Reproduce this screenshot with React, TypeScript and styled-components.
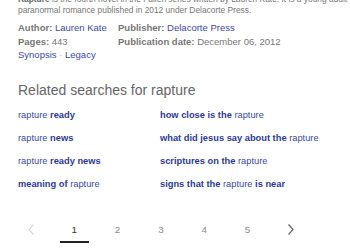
import React from "react";
import styled, { createGlobalStyle } from "styled-components";

const Global = createGlobalStyle`
  html, body { margin: 0; padding: 0; background: #fff; }
  body { font-family: Arial, "Liberation Sans", sans-serif; overflow: hidden; }
`;

const Page = styled.div`
  width: 350px;
  height: 248px;
  overflow: hidden;
  padding: 0 0 0 18px;
  box-sizing: border-box;
`;

const Desc = styled.p`
  margin: -6.25px 0 0;
  font-size: 8.4px;
  line-height: 11.5px;
  color: #777;
  white-space: nowrap;
  b { color: #666; }
`;

const Facts = styled.div`
  display: grid;
  grid-template-columns: 100px auto;
  margin-top: 4.5px;
  font-size: 9.5px;
  line-height: 13.5px;
  color: #777;
  white-space: nowrap;
`;

const Label = styled.b`
  font-weight: bold;
  color: #777;
`;

const Link = styled.a`
  color: #3b4aa8;
  text-decoration: none;
`;

const Sub = styled.div`
  font-size: 9.5px;
  line-height: 13.5px;
  color: #aaa;
`;

const Heading = styled.h3`
  margin: 19.25px 0 0;
  font-size: 14px;
  font-weight: normal;
  line-height: 18px;
  color: #666;
`;

const Related = styled.div`
  display: grid;
  grid-template-columns: 142px auto;
  margin-top: 5px;
`;

const RLink = styled.a`
  display: block;
  font-size: 9.3px;
  line-height: 23px;
  color: #3b4aa8;
  text-decoration: none;
  white-space: nowrap;
  b { font-weight: bold; color: #2c3a9c; }
`;

const Pager = styled.div`
  display: flex;
  align-items: stretch;
  gap: 14.3px;
  margin: 21px 0 0 -1.5px;
  height: 26px;
`;

const PItem = styled.div<{ $active?: boolean }>`
  width: 29px;
  height: 26px;
  box-sizing: border-box;
  display: flex;
  align-items: center;
  justify-content: center;
  font-size: 9.8px;
  color: ${(p) => (p.$active ? "#333" : "#8a8a8a")};
  border-bottom: 2px solid ${(p) => (p.$active ? "#222" : "transparent")};
`;

const Arrow = styled.svg`
  width: 7px;
  height: 11px;
`;

const related: [React.ReactNode, React.ReactNode][] = [
  [<>rapture <b>ready</b></>, <><b>how close is the</b> rapture</>],
  [<>rapture <b>news</b></>, <><b>what did jesus say about the</b> rapture</>],
  [<>rapture <b>ready news</b></>, <><b>scriptures on the</b> rapture</>],
  [<><b>meaning of</b> rapture</>, <><b>signs that the</b> rapture <b>is near</b></>],
];

export default function App() {
  return (
    <Page>
      <Global />
      <Desc>
        <b>Rapture</b> is the fourth novel in the Fallen series written by Lauren Kate. It is a young adult
        <br />
        paranormal romance published in 2012 under Delacorte Press.
      </Desc>
      <Facts>
        <div><Label>Author:</Label> <Link href="#">Lauren Kate</Link></div>
        <div><Label>Publisher:</Label> <Link href="#">Delacorte Press</Link></div>
        <div><Label>Pages:</Label> 443</div>
        <div><Label>Publication date:</Label> December 06, 2012</div>
      </Facts>
      <Sub>
        <Link href="#">Synopsis</Link> · <Link href="#">Legacy</Link>
      </Sub>
      <Heading>Related searches for rapture</Heading>
      <Related>
        {related.map(([a, b], i) => (
          <React.Fragment key={i}>
            <RLink href="#">{a}</RLink>
            <RLink href="#">{b}</RLink>
          </React.Fragment>
        ))}
      </Related>
      <Pager>
        <PItem>
          <Arrow viewBox="0 0 7 11"><path d="M5.5 0.5 L1 5.5 L5.5 10.5" fill="none" stroke="#ccc" strokeWidth="1.1" /></Arrow>
        </PItem>
        <PItem $active>1</PItem>
        <PItem>2</PItem>
        <PItem>3</PItem>
        <PItem>4</PItem>
        <PItem>5</PItem>
        <PItem>
          <Arrow viewBox="0 0 7 11"><path d="M1.5 0.5 L6 5.5 L1.5 10.5" fill="none" stroke="#666" strokeWidth="1.2" /></Arrow>
        </PItem>
      </Pager>
    </Page>
  );
}
